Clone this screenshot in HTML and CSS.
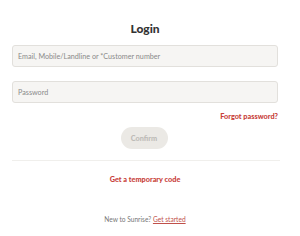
FILE: index.html
```html
<!DOCTYPE html>
<html>
<head>
<meta charset="utf-8">
<link rel="stylesheet" href="styles.css">
</head>
<body>
<main class="login">
  <h1 class="title">Login</h1>
  <div class="field">Email, Mobile/Landline or *Customer number</div>
  <div class="field field-pw">Password</div>
  <div class="forgot-row"><a class="link-red">Forgot password?</a></div>
  <div class="btn-row"><button class="confirm">Confirm</button></div>
  <hr class="divider">
  <div class="temp-row"><a class="link-red">Get a temporary code</a></div>
  <p class="signup">New to Sunrise? <a class="signup-link">Get started</a></p>
</main>
</body>
</html>
```
FILE: styles.css
```css
html, body {
  margin: 0;
  padding: 0;
  background: #fff;
}
body {
  font-family: Lato, "Open Sans", sans-serif;
  width: 300px;
  height: 236px;
  overflow: hidden;
}
.login {
  padding: 0 22px 0 12px;
  display: flex;
  flex-direction: column;
}
.title {
  margin: 21px 0 0;
  height: 16px;
  line-height: 16px;
  font-size: 12px;
  font-weight: 900;
  color: #333;
  text-align: center;
}
.field {
  margin-top: 8px;
  height: 22px;
  box-sizing: border-box;
  border: 1px solid #e2e0dc;
  border-radius: 3px;
  background: #f6f5f3;
  padding-left: 5px;
  display: flex;
  align-items: center;
  font-size: 7.2px;
  color: #8a8a8a;
}
.field-pw {
  margin-top: 14px;
}
.forgot-row {
  margin-top: 5px;
  height: 10px;
  line-height: 10px;
  text-align: right;
}
.link-red {
  color: #c8413a;
  font-weight: 900;
  font-size: 7.3px;
}
.btn-row {
  margin-top: 9px;
  display: flex;
  justify-content: center;
}
.confirm {
  width: 47px;
  height: 22px;
  border: none;
  border-radius: 11px;
  background: #ebe9e5;
  color: #bdbbb7;
  font-family: inherit;
  font-weight: 900;
  font-size: 7.3px;
  padding: 0;
  margin-left: -2px;
}
.divider {
  margin: 11px -2px 0 0;
  border: none;
  border-top: 1px solid #f0efec;
  height: 0;
}
.temp-row {
  margin-top: 10px;
  height: 10px;
  line-height: 10px;
  text-align: center;
}
.signup {
  margin: 33px 0 0;
  height: 10px;
  line-height: 10px;
  text-align: center;
  font-size: 6.6px;
  color: #777;
}
.signup-link {
  color: #c0504a;
  text-decoration: underline;
}
```
